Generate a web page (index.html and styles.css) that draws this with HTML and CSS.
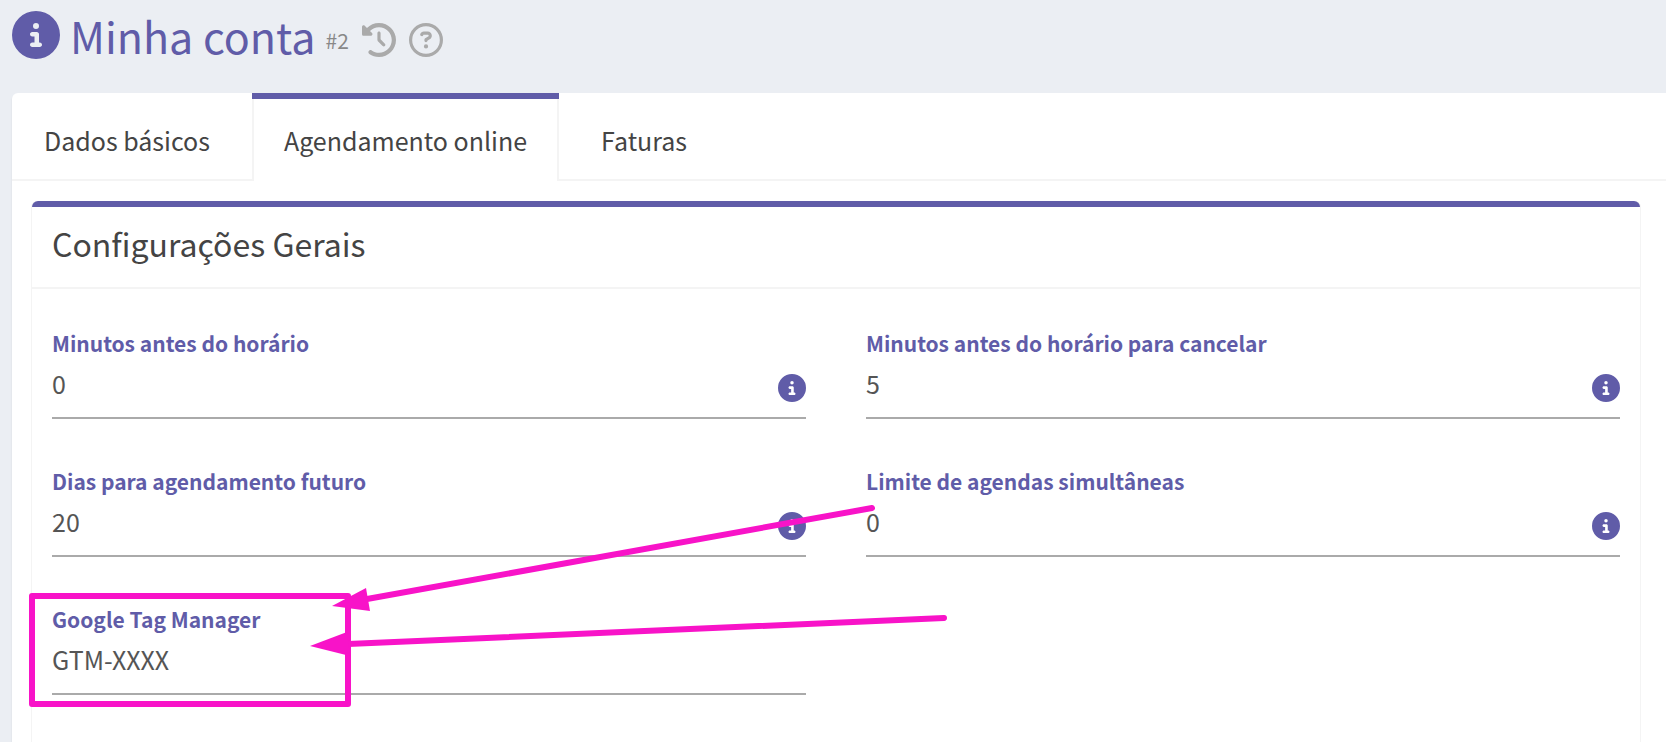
FILE: index.html
```html
<!DOCTYPE html>
<html lang="pt-BR">
<head>
  <meta charset="UTF-8">
  <meta name="viewport" content="width=device-width, initial-scale=1">
  <title>Minha conta</title>
  <link rel="stylesheet" href="styles.css">
</head>
<body>
  <svg class="sprite" aria-hidden="true">
    <symbol id="icon-info" viewBox="0 0 512 512">
      <path d="M256 512A256 256 0 1 0 256 0a256 256 0 1 0 0 512zM216 336h24V272H216c-13.300 0-24-10.700-24-24s10.700-24 24-24h48c13.300 0 24 10.700 24 24v88h8c13.300 0 24 10.700 24 24s-10.700 24-24 24H216c-13.300 0-24-10.700-24-24s10.700-24 24-24zm40-208a32 32 0 1 1 0 64 32 32 0 1 1 0-64z"/>
    </symbol>
    <symbol id="icon-history" viewBox="0 0 512 512">
      <path d="M75 75L41 41C25.900 25.900 0 36.600 0 57.900V168c0 13.300 10.700 24 24 24H134.100c21.400 0 32.100-25.900 17-41l-30.800-30.800C155 85.500 203 64 256 64c106 0 192 86 192 192s-86 192-192 192c-40.800 0-78.600-12.700-109.700-34.400c-14.500-10.100-34.400-6.600-44.600 7.900s-6.600 34.400 7.900 44.600C151.200 495 201.700 512 256 512c141.400 0 256-114.600 256-256S397.400 0 256 0C185.300 0 121.300 28.700 75 75zm181 53c-13.300 0-24 10.700-24 24V256c0 6.400 2.500 12.500 7 17l72 72c9.400 9.400 24.600 9.400 33.900 0s9.400-24.600 0-33.900l-65-65V152c0-13.300-10.700-24-24-24z"/>
    </symbol>
    <symbol id="icon-help" viewBox="0 0 512 512">
      <path d="M464 256A208 208 0 1 0 48 256a208 208 0 1 0 416 0zM0 256a256 256 0 1 1 512 0A256 256 0 1 1 0 256zm169.800-90.700c7.900-22.300 29.100-37.300 52.800-37.300h58.300c34.900 0 63.100 28.300 63.100 63.100c0 22.600-12.100 43.500-31.700 54.800L280 264.400c-.2 13-10.900 23.600-24 23.600c-13.300 0-24-10.700-24-24V250.500c0-8.600 4.600-16.500 12.100-20.800l44.300-25.400c4.700-2.700 7.600-7.700 7.600-13.100c0-8.400-6.800-15.100-15.100-15.100H222.600c-3.400 0-6.400 2.100-7.500 5.300l-.4 1.200c-4.400 12.500-18.200 19-30.600 14.600s-19-18.200-14.600-30.600l.4-1.200zM224 352a32 32 0 1 1 64 0 32 32 0 1 1 -64 0z"/>
    </symbol>
  </svg>

  <header class="page-header">
    <svg class="title-icon"><use href="#icon-info"/></svg>
    <h1>Minha conta</h1>
    <small>#2</small>
    <button type="button" class="icon-btn" aria-label="Histórico"><svg><use href="#icon-history"/></svg></button>
    <button type="button" class="icon-btn" aria-label="Ajuda"><svg><use href="#icon-help"/></svg></button>
  </header>

  <main class="tabs-box">
    <nav class="tabs">
      <a href="#dados" class="tab">Dados básicos</a>
      <a href="#agendamento" class="tab active">Agendamento online</a>
      <a href="#faturas" class="tab">Faturas</a>
    </nav>

    <section class="panel">
      <h2>Configurações Gerais</h2>
      <form class="fields">
        <div class="field">
          <label for="minutosAntes">Minutos antes do horário</label>
          <div class="control">
            <input type="text" id="minutosAntes" value="0">
            <button type="button" class="info-btn" aria-label="Informações"><svg><use href="#icon-info"/></svg></button>
          </div>
        </div>
        <div class="field">
          <label for="minutosCancelar">Minutos antes do horário para cancelar</label>
          <div class="control">
            <input type="text" id="minutosCancelar" value="5">
            <button type="button" class="info-btn" aria-label="Informações"><svg><use href="#icon-info"/></svg></button>
          </div>
        </div>
        <div class="field">
          <label for="diasFuturo">Dias para agendamento futuro</label>
          <div class="control">
            <input type="text" id="diasFuturo" value="20">
            <button type="button" class="info-btn" aria-label="Informações"><svg><use href="#icon-info"/></svg></button>
          </div>
        </div>
        <div class="field">
          <label for="limiteAgendas">Limite de agendas simultâneas</label>
          <div class="control">
            <input type="text" id="limiteAgendas" value="0">
            <button type="button" class="info-btn" aria-label="Informações"><svg><use href="#icon-info"/></svg></button>
          </div>
        </div>
        <div class="field">
          <label for="tagManager">Google Tag Manager</label>
          <div class="control">
            <input type="text" id="tagManager" value="GTM-XXXX">
          </div>
          <!-- highlight box and arrows, origin at the field's top left corner -->
          <svg class="callout" aria-hidden="true">
            <rect x="-20" y="-9" width="316" height="108"/>
            <path d="M820 -97L315 -6M892 13L296 39"/>
            <polygon points="280,1 314,-17 318,6"/>
            <polygon points="258,41 295,27 298,51"/>
          </svg>
        </div>
      </form>
    </section>
  </main>
</body>
</html>
```
FILE: styles.css
```css
* {
  box-sizing: border-box;
}

body {
  display: flex;
  flex-direction: column;
  min-height: 100vh;
  margin: 0;
  padding-left: 12px;
  background: #ebeef3;
  color: #444;
  font-family: "Noto Sans CJK SC", "Noto Sans", sans-serif;
  font-size: 25px;
}

.sprite {
  display: none;
}

svg {
  display: block;
  fill: currentColor;
}

button {
  padding: 0;
  border: none;
  background: none;
  cursor: pointer;
}

.page-header {
  display: flex;
  align-items: center;
  height: 93px;
  padding-bottom: 24px;
  color: #605ca8;
}

.title-icon {
  width: 48px;
  height: 48px;
}

h1 {
  margin: 0 10px;
  font-size: 43px;
  font-weight: 400;
  line-height: 56px;
}

small {
  margin-top: 10px;
  color: #888;
  font-size: 21px;
  line-height: 30px;
}

.icon-btn {
  margin-top: 10px;
  margin-left: 13px;
  color: #aaa;
}

.icon-btn svg {
  width: 34px;
  height: 34px;
}

.tabs-box {
  display: flex;
  flex: 1;
  flex-direction: column;
  background: #fff;
  border-top-left-radius: 6px;
  box-shadow: 0 2px 2px rgba(0, 0, 0, 0.1);
}

.tabs {
  display: flex;
  height: 88px;
  border-bottom: 2px solid #f4f4f4;
}

.tab {
  height: 88px;
  padding: 18px 32px 0;
  border-top: 6px solid transparent;
  color: #444;
  line-height: 46px;
  text-decoration: none;
}

.tab.active {
  margin: 0 10px;
  background: #fff;
  border-top-color: #605ca8;
  box-shadow: inset 2px 0 #f4f4f4, inset -2px 0 #f4f4f4;
}

.panel {
  flex: 1;
  margin: 20px 26px 0 20px;
  border-top: 6px solid #605ca8;
  border-radius: 6px 6px 0 0;
  box-shadow: -1px 0 #f4f4f4, 1px 0 #f4f4f4;
}

h2 {
  margin: 0;
  padding: 16px 20px 24px;
  border-bottom: 2px solid #f4f4f4;
  font-size: 32px;
  font-weight: 400;
  line-height: 40px;
}

.fields {
  display: grid;
  grid-template-columns: 1fr 1fr;
  gap: 48px 60px;
  padding: 40px 20px 20px;
}

.field {
  position: relative;
}

label {
  display: block;
  padding-bottom: 2px;
  color: #605ca8;
  font-size: 21px;
  font-weight: 700;
  line-height: 28px;
}

.control {
  display: flex;
  align-items: center;
  height: 60px;
  border-bottom: 2px solid #aaa;
}

input {
  flex: 1;
  min-width: 0;
  height: 58px;
  padding: 0 0 10px;
  border: none;
  outline: none;
  background: transparent;
  color: #555;
  font: inherit;
}

.info-btn {
  color: #605ca8;
}

.info-btn svg {
  width: 28px;
  height: 28px;
}

.callout {
  position: absolute;
  top: 0;
  left: 0;
  width: 100%;
  height: 100%;
  overflow: visible;
  color: #f813c8;
  pointer-events: none;
}

.callout rect,
.callout path {
  fill: none;
  stroke: currentColor;
  stroke-width: 6;
  stroke-linecap: round;
  stroke-linejoin: round;
}
```
